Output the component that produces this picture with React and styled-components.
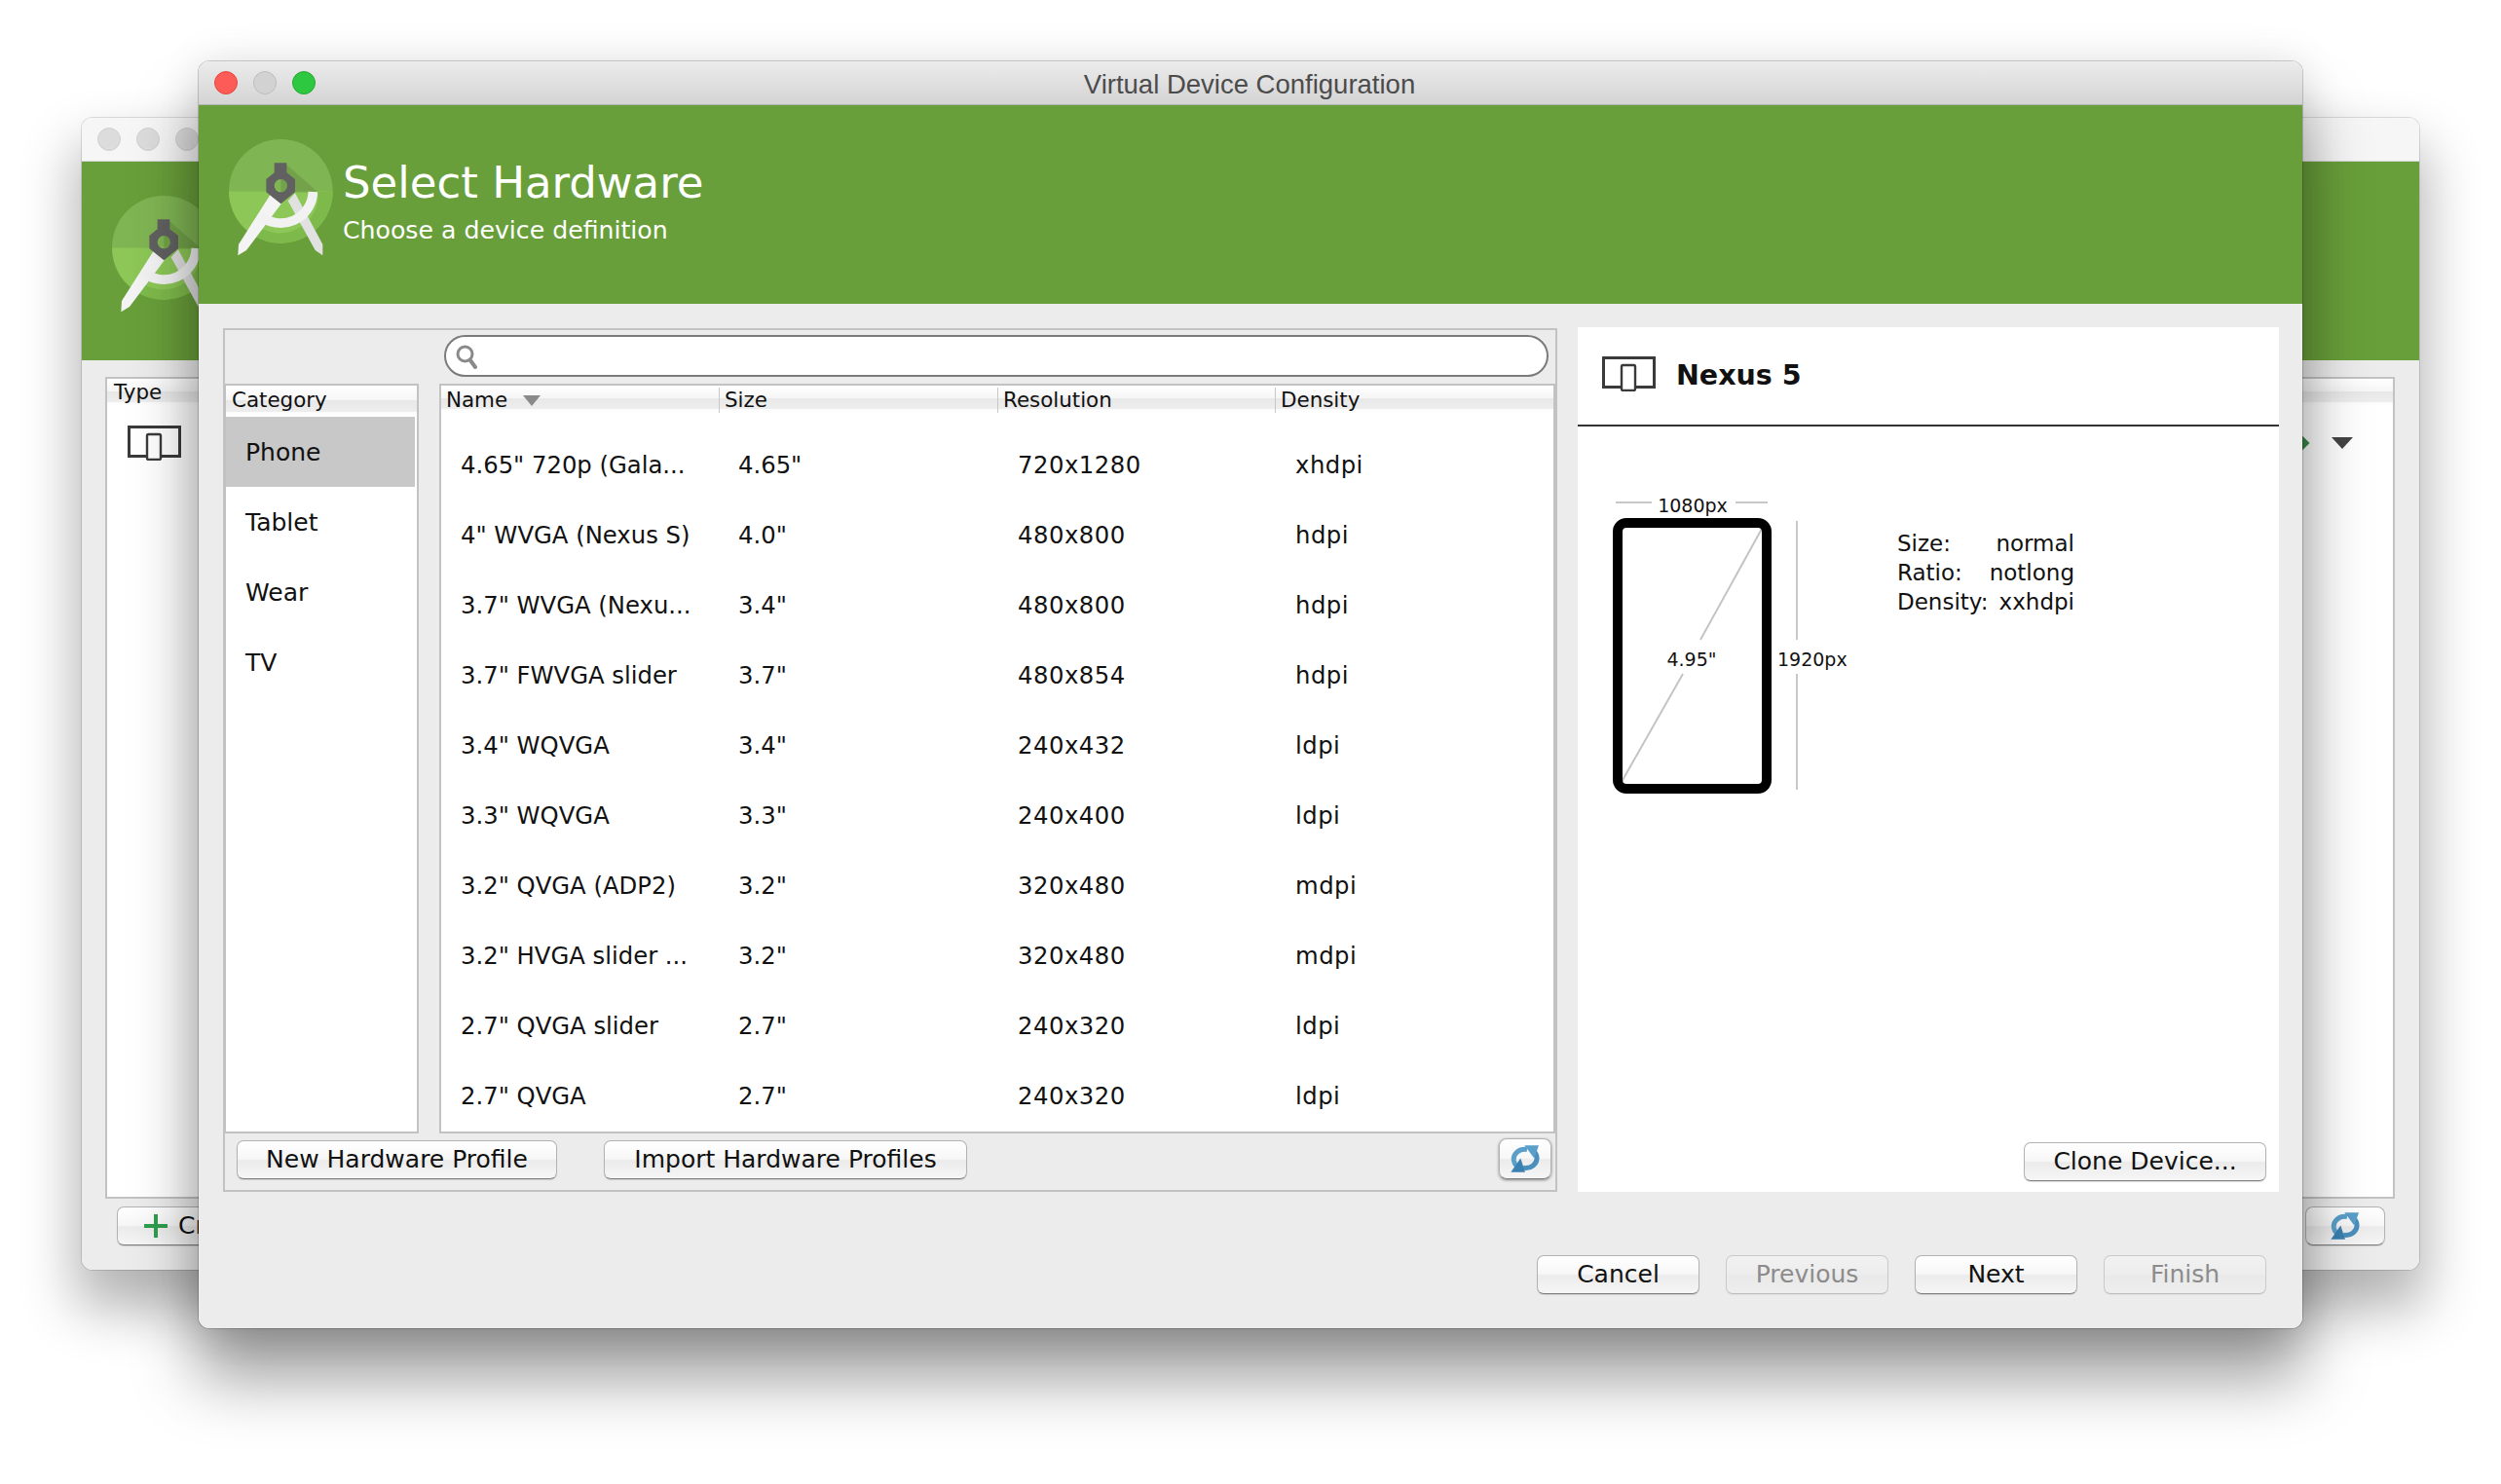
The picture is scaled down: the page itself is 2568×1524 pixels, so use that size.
import React from "react";
import styled, { createGlobalStyle } from "styled-components";

const Global = createGlobalStyle`
  html, body { margin: 0; padding: 0; background: #fff; }
  * { box-sizing: border-box; }
`;

const Desktop = styled.div`
  position: relative;
  width: 2568px;
  height: 1524px;
  overflow: hidden;
  background: #fff;
  font-family: "DejaVu Sans", "Liberation Sans", sans-serif;
  color: #111;
`;

const Window = styled.div`
  position: absolute;
  left: ${(p) => p.$x}px;
  top: ${(p) => p.$y}px;
  width: ${(p) => p.$w}px;
  height: ${(p) => p.$h}px;
  display: flex;
  flex-direction: column;
  background: #ececec;
  border-radius: 11px;
  overflow: hidden;
`;

const WindowShadow = styled.div`
  position: absolute;
  left: ${(p) => p.$x}px;
  top: ${(p) => p.$y}px;
  width: ${(p) => p.$w}px;
  height: ${(p) => p.$h}px;
  border-radius: 11px;
  box-shadow: ${(p) =>
    p.$front
      ? "0 0 0 1px rgba(0,0,0,.18), 0 0 44px rgba(0,0,0,.1), 0 50px 66px 2px rgba(0,0,0,.38)"
      : "0 0 0 1px rgba(0,0,0,.12), 0 34px 56px 6px rgba(0,0,0,.3)"};
`;

const TitleBar = styled.div`
  position: relative;
  flex: none;
  height: 45px;
  display: flex;
  align-items: center;
  gap: 16px;
  padding-left: 16px;
  background: ${(p) =>
    p.$active ? "linear-gradient(#ececec, #d4d4d4)" : "#f6f6f6"};
  border-bottom: 1px solid ${(p) => (p.$active ? "#b4b4b4" : "#d8d8d8")};
`;

const Light = styled.span`
  width: 24px;
  height: 24px;
  border-radius: 50%;
  background: ${(p) => p.$c};
  border: 1px solid ${(p) => p.$b};
`;

const WindowTitle = styled.div`
  position: absolute;
  left: 0;
  right: 0;
  top: 0;
  height: 45px;
  line-height: 48px;
  text-align: center;
  font-family: "Liberation Sans", sans-serif;
  font-size: 27.5px;
  color: #4c4c4c;
  padding-right: 2px;
`;

const Banner = styled.div`
  flex: none;
  height: 204px;
  display: flex;
  background: #699f3a;
  padding: 21px 0 0 21px;
`;

const BannerText = styled.div`
  display: flex;
  flex-direction: column;
  color: #fff;
  margin-left: -23px;
`;

const BannerTitle = styled.div`
  font-size: 45px;
  line-height: 54px;
  margin-top: 32px;
`;

const BannerSub = styled.div`
  font-size: 25.2px;
  line-height: 34px;
  margin-top: 5px;
`;

const MainBody = styled.div`
  flex: none;
  display: flex;
  padding: 24px 24px 0 25px;
  gap: 21px;
  height: 912px;
`;

const LeftPanel = styled.div`
  width: 1370px;
  height: 887px;
  margin-top: 1px;
  display: flex;
  flex-direction: column;
  border: 2px solid #c2c2c2;
`;

const SearchRow = styled.div`
  flex: none;
  height: 55px;
  padding: 5px 0 0 225px;
`;

const SearchBox = styled.div`
  position: relative;
  width: 1134px;
  height: 43px;
  display: flex;
  align-items: center;
  padding-left: 9px;
  background: #fff;
  border: 2px solid #7b7b7b;
  border-radius: 22px;
`;

const TablesRow = styled.div`
  flex: none;
  display: flex;
  height: 770px;
`;

const CategoryTable = styled.div`
  width: 199px;
  margin-right: 21px;
  background: #fff;
  border: 2px solid #c2c2c2;
  border-left-width: 1px;
`;

const NameTable = styled.div`
  flex: 1;
  background: #fff;
  border: 2px solid #c2c2c2;
  overflow: hidden;
`;

const HeaderBar = styled.div`
  display: ${(p) => (p.$grid ? "grid" : "flex")};
  grid-template-columns: 286px 286px 285px 1fr;
  height: ${(p) => p.$h}px;
  background: linear-gradient(#fff, #f6f6f6 46%, #e8e8e8 46%, #eeeeee 84%, #fbfbfb 84%, #fff);
  font-size: 21.4px;
  color: #111;
`;

const HeaderCell = styled.div`
  display: flex;
  align-items: center;
  gap: 16px;
  height: 26px;
  margin-top: ${(p) => p.$mt ?? 2}px;
  padding-left: ${(p) => p.$pad ?? 5}px;
  line-height: 26px;
  border-right: ${(p) => (p.$end ? "none" : "1px solid #c8c8c8")};
`;

const CategoryRow = styled.div`
  height: 72px;
  line-height: 73px;
  padding-left: 20px;
  margin-right: 2px;
  font-size: 25px;
  background: ${(p) => (p.$selected ? "#c8c8c8" : "transparent")};
`;

const RowList = styled.div`
  padding-top: 18px;
`;

const DeviceRow = styled.div`
  display: grid;
  grid-template-columns: 285px 287px 285px 1fr;
  height: 72px;
  line-height: 72px;
  font-size: 24.3px;
`;

const DeviceCell = styled.div`
  padding-left: 20px;
  white-space: nowrap;
  letter-spacing: ${(p) => (p.$wide ? 0.5 : 0)}px;
`;

const ActionRow = styled.div`
  flex: 1;
  display: flex;
  align-items: flex-start;
  gap: 48px;
  padding: 7px 4px 0 12px;
`;

const Button = styled.button`
  flex: none;
  width: ${(p) => p.$w}px;
  height: 40px;
  padding: 0;
  font: inherit;
  font-size: 25px;
  line-height: 38px;
  color: ${(p) => (p.$disabled ? "#8c8c8c" : "#111")};
  background: ${(p) =>
    p.$disabled
      ? "linear-gradient(#f1f1f1, #ededed 48%, #e9e9e9 52%, #eeeeee)"
      : "linear-gradient(#fff, #f7f7f7 48%, #ebebeb 52%, #f6f6f6)"};
  border: 1px solid ${(p) => (p.$disabled ? "#cacaca" : "#b2b2b2")};
  border-bottom-color: ${(p) => (p.$disabled ? "#bdbdbd" : "#808080")};
  border-radius: 7px;
  box-shadow: 0 1px 1px rgba(0, 0, 0, ${(p) => (p.$disabled ? 0.06 : 0.14)});
`;

const RefreshButton = styled(Button)`
  display: flex;
  align-items: center;
  justify-content: center;
  margin-left: auto;
  margin-top: ${(p) => p.$mt ?? -2}px;
  height: ${(p) => p.$h ?? 42}px;
  ${(p) => (p.$soft ? "" : "box-shadow: 0 1px 3px rgba(0,0,0,.45);")}
  border-radius: 8px;
`;

const RightPanel = styled.div`
  width: 720px;
  height: 888px;
  display: flex;
  flex-direction: column;
  background: #fff;
`;

const DetailHeader = styled.div`
  flex: none;
  height: 102px;
  display: flex;
  align-items: center;
  gap: 21px;
  padding: 0 0 5px 25px;
  border-bottom: 2px solid #333;
`;

const DetailName = styled.div`
  font-size: 28.5px;
  font-weight: 700;
  margin-top: 3px;
`;

const DetailBody = styled.div`
  flex: 1;
  display: flex;
  align-items: flex-start;
  padding: 66px 0 0 20px;
`;

const InfoGrid = styled.div`
  display: grid;
  grid-template-columns: auto auto;
  justify-content: space-between;
  width: 182px;
  margin: 39px 0 0 38px;
  font-size: 23px;
  line-height: 30px;
`;

const InfoValue = styled.div`
  text-align: right;
`;

const DetailFooter = styled.div`
  flex: none;
  display: flex;
  justify-content: flex-end;
  padding: 0 13px 11px 0;
`;

const Footer = styled.div`
  flex: 1;
  display: flex;
  justify-content: flex-end;
  gap: 27px;
  padding: 65px 37px 0 0;
`;

const BackBody = styled.div`
  flex: 1;
  display: flex;
  flex-direction: column;
  padding: 17px 25px 0 24px;
`;

const TypeTable = styled.div`
  flex: none;
  height: 844px;
  background: #fff;
  border: 2px solid #c2c2c2;
`;

const TypeRow = styled.div`
  display: flex;
  align-items: center;
  justify-content: space-between;
  padding: 20px 41px 0 21px;
`;

const TypeRight = styled.div`
  display: flex;
  align-items: center;
  gap: 25px;
`;

const Diamond = styled.span`
  width: 12px;
  height: 12px;
  background: #3c8a4a;
  transform: rotate(45deg);
`;

const Caret = styled.span`
  width: 0;
  height: 0;
  border-left: 11px solid transparent;
  border-right: 11px solid transparent;
  border-top: 12px solid #444;
`;

const BackActions = styled.div`
  display: flex;
  padding: 8px 10px 0 12px;
`;

const AddButton = styled(Button)`
  display: flex;
  align-items: center;
  gap: 11px;
  padding-left: 27px;
  white-space: nowrap;
  overflow: hidden;
`;

const Logo = () => (
  <svg width="150" height="150" viewBox="0 0 450 450">
    <path d="M30 202 A160 160 0 0 1 350 202 Z" fill="#80b553" />
    <path d="M30 202 A160 160 0 0 0 350 202 Z" fill="#8dc757" />
    <path d="M105 338 A160 160 0 0 0 350 202 L305 205 A118 118 0 0 1 112 304 Z" fill="#7eba4b" />
    <path d="M210 122 L306 206 L190 206 L190 130 Z" fill="#000" opacity="0.1" />
    <path d="M212 232 L234 208 L319 366 L319 400 L296 384 Z" fill="#e1e1e1" />
    <path d="M158 212 L192 240 L84 384 L58 400 L60 366 Z" fill="#f4f4f4" />
    <path d="M289 204 A99 99 0 0 1 125 276" fill="none" stroke="#f2f2f2" strokeWidth="29" />
    <path
      fillRule="evenodd"
      d="M170 115 H208 V145 L234 165 V205 L190 241 L145 205 V165 L170 145 Z M190 165 A20 20 0 1 0 190 205 A20 20 0 1 0 190 165 Z"
      fill="#616161"
    />
  </svg>
);

const DeviceIcon = () => (
  <svg width="55" height="36" viewBox="0 0 55 36">
    <rect x="1.5" y="1.5" width="52" height="30" fill="#fff" stroke="#3a3a3a" strokeWidth="3" />
    <rect x="20" y="9" width="14" height="26" rx="1.5" fill="#fff" stroke="#3a3a3a" strokeWidth="2.4" />
  </svg>
);

const SearchIcon = () => (
  <svg width="24" height="26" viewBox="0 0 24 26">
    <circle cx="10.5" cy="10.5" r="7.5" fill="none" stroke="#8a8a8a" strokeWidth="3" />
    <path d="M15.5 16.5 L21 24" stroke="#8a8a8a" strokeWidth="4" strokeLinecap="round" />
  </svg>
);

const SortArrow = () => (
  <svg width="18" height="11" viewBox="0 0 18 11">
    <path d="M0 0 H18 L9 11 Z" fill="#8a8a8a" />
  </svg>
);

const RefreshIcon = () => (
  <svg width="30" height="30" viewBox="95 83 90 85">
    <path d="M146 97 C122 93 103 110 105 130 C106 138 109 143 114 148" fill="none" stroke="#5a9fca" strokeWidth="15" />
    <path d="M134 153 C158 158 178 141 176 121 C175 113 172 107 166 102" fill="none" stroke="#4a8fbe" strokeWidth="15" />
    <path d="M182 84 L138 84 L168 124 Z" fill="#5a9fca" />
    <path d="M96 167 L140 167 L126 124 Z" fill="#3a80b0" />
  </svg>
);

const PlusIcon = () => (
  <svg width="24" height="24" viewBox="0 0 24 24">
    <path d="M10 0 H14 V10 H24 V14 H14 V24 H10 V14 H0 V10 H10 Z" fill="#2f9e4f" />
  </svg>
);

const DeviceDiagram = () => (
  <svg
    width="270"
    height="330"
    viewBox="1640 504 270 330"
    fontFamily='"DejaVu Sans", sans-serif'
    fontSize="19"
    fill="#111"
  >
    <path d="M1659 516 H1696 M1782 516 H1815" stroke="#c8c8c8" strokeWidth="2" />
    <text x="1738" y="526" textAnchor="middle">1080px</text>
    <path d="M1845 535 V657 M1845 692 V811" stroke="#c8c8c8" strokeWidth="2" />
    <path d="M1809 543 L1746 657 M1728 692 L1665 803" stroke="#c4c4c4" strokeWidth="2" />
    <rect x="1661" y="537" width="153" height="273" rx="9" fill="none" stroke="#000" strokeWidth="10" />
    <text x="1737" y="684" textAnchor="middle">4.95"</text>
    <text x="1825" y="684">1920px</text>
  </svg>
);

const devices = [
  ['4.65" 720p (Gala...', '4.65"', "720x1280", "xhdpi"],
  ['4" WVGA (Nexus S)', '4.0"', "480x800", "hdpi"],
  ['3.7" WVGA (Nexu...', '3.4"', "480x800", "hdpi"],
  ['3.7" FWVGA slider', '3.7"', "480x854", "hdpi"],
  ['3.4" WQVGA', '3.4"', "240x432", "ldpi"],
  ['3.3" WQVGA', '3.3"', "240x400", "ldpi"],
  ['3.2" QVGA (ADP2)', '3.2"', "320x480", "mdpi"],
  ['3.2" HVGA slider ...', '3.2"', "320x480", "mdpi"],
  ['2.7" QVGA slider', '2.7"', "240x320", "ldpi"],
  ['2.7" QVGA', '2.7"', "240x320", "ldpi"],
];

const categories = ["Phone", "Tablet", "Wear", "TV"];

export default function App() {
  return (
    <Desktop>
      <Global />
      <WindowShadow $x={84} $y={121} $w={2400} $h={1183} />
      <Window $x={84} $y={121} $w={2400} $h={1183}>
        <TitleBar>
          <Light $c="#dcdcdc" $b="#d0d0d0" />
          <Light $c="#dcdcdc" $b="#d0d0d0" />
          <Light $c="#dcdcdc" $b="#d0d0d0" />
        </TitleBar>
        <Banner>
          <Logo />
        </Banner>
        <BackBody>
          <TypeTable>
            <HeaderBar $h={28}>
              <HeaderCell $pad={7} $mt={1} $end>Type</HeaderCell>
            </HeaderBar>
            <TypeRow>
              <DeviceIcon />
              <TypeRight>
                <Diamond />
                <Caret />
              </TypeRight>
            </TypeRow>
          </TypeTable>
          <BackActions>
            <AddButton $w={420}>
              <PlusIcon />
              Create Virtual Device...
            </AddButton>
            <RefreshButton $w={82} $mt={0} $h={40} $soft>
              <RefreshIcon />
            </RefreshButton>
          </BackActions>
        </BackBody>
      </Window>

      <WindowShadow $front $x={204} $y={63} $w={2160} $h={1301} />
      <Window $x={204} $y={63} $w={2160} $h={1301}>
        <TitleBar $active>
          <Light $c="#fc5b57" $b="#e2463f" />
          <Light $c="#d2d2d2" $b="#bdbdbd" />
          <Light $c="#2ec840" $b="#25a833" />
          <WindowTitle>Virtual Device Configuration</WindowTitle>
        </TitleBar>
        <Banner>
          <Logo />
          <BannerText>
            <BannerTitle>Select Hardware</BannerTitle>
            <BannerSub>Choose a device definition</BannerSub>
          </BannerText>
        </Banner>
        <MainBody>
          <LeftPanel>
            <SearchRow>
              <SearchBox>
                <SearchIcon />
              </SearchBox>
            </SearchRow>
            <TablesRow>
              <CategoryTable>
                <HeaderBar $h={32}>
                  <HeaderCell $pad={6} $end>Category</HeaderCell>
                </HeaderBar>
                {categories.map((c, i) => (
                  <CategoryRow key={c} $selected={i === 0}>{c}</CategoryRow>
                ))}
              </CategoryTable>
              <NameTable>
                <HeaderBar $h={28} $grid>
                  <HeaderCell>Name <SortArrow /></HeaderCell>
                  <HeaderCell>Size</HeaderCell>
                  <HeaderCell>Resolution</HeaderCell>
                  <HeaderCell $end>Density</HeaderCell>
                </HeaderBar>
                <RowList>
                  {devices.map((d) => (
                    <DeviceRow key={d[0]}>
                      {d.map((v, i) => (
                        <DeviceCell key={i} $wide={i >= 2}>{v}</DeviceCell>
                      ))}
                    </DeviceRow>
                  ))}
                </RowList>
              </NameTable>
            </TablesRow>
            <ActionRow>
              <Button $w={329}>New Hardware Profile</Button>
              <Button $w={373}>Import Hardware Profiles</Button>
              <RefreshButton $w={54}>
                <RefreshIcon />
              </RefreshButton>
            </ActionRow>
          </LeftPanel>
          <RightPanel>
            <DetailHeader>
              <DeviceIcon />
              <DetailName>Nexus 5</DetailName>
            </DetailHeader>
            <DetailBody>
              <DeviceDiagram />
              <InfoGrid>
                <div>Size:</div><InfoValue>normal</InfoValue>
                <div>Ratio:</div><InfoValue>notlong</InfoValue>
                <div>Density:</div><InfoValue>xxhdpi</InfoValue>
              </InfoGrid>
            </DetailBody>
            <DetailFooter>
              <Button $w={249}>Clone Device...</Button>
            </DetailFooter>
          </RightPanel>
        </MainBody>
        <Footer>
          <Button $w={167}>Cancel</Button>
          <Button $w={167} $disabled>Previous</Button>
          <Button $w={167}>Next</Button>
          <Button $w={167} $disabled>Finish</Button>
        </Footer>
      </Window>
    </Desktop>
  );
}
